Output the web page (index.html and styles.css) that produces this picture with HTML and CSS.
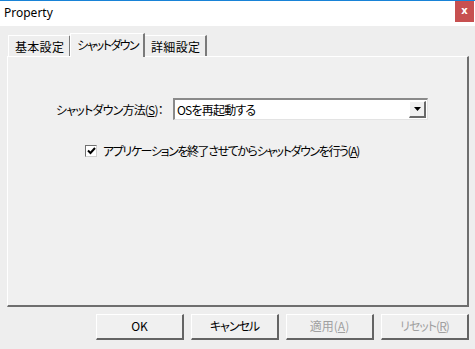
FILE: index.html
```html
<!DOCTYPE html>
<html lang="ja">
<head>
    <meta charset="UTF-8">
    <meta name="viewport" content="width=device-width, initial-scale=1.0">
    <title>Property</title>
    <link rel="stylesheet" href="styles.css">
</head>
<body>
    <div class="window">
        <div class="titlebar">
            <span class="title">Property</span>
            <span class="close">x</span>
        </div>
        <div class="body">
            <div class="tabs">
                <div class="tab">基本設定</div>
                <div class="tab active">シャットダウン</div>
                <div class="tab">詳細設定</div>
            </div>
            <div class="panel">
                <div class="row">
                    <span class="label">シャットダウン方法(<u>S</u>)：</span>
                    <div class="select">
                        <span class="value">OSを再起動する</span>
                        <span class="arrow">
                            <svg width="7" height="4" viewBox="0 0 7 4"><path d="M0 0h7L3.5 4z" fill="#000"/></svg>
                        </span>
                    </div>
                </div>
                <label class="check">
                    <span class="box">
                        <svg width="9" height="9" viewBox="0 0 9 9"><path d="M1 4.5l2.5 2.5L8 2" stroke="#000" stroke-width="2" fill="none"/></svg>
                    </span>
                    <span class="check-text">アプリケーションを終了させてからシャットダウンを行う(<u>A</u>)</span>
                </label>
            </div>
            <div class="buttons">
                <div class="btn">OK</div>
                <div class="btn kana">キャンセル</div>
                <div class="btn disabled">適用(<u>A</u>)</div>
                <div class="btn disabled kana">リセット(<u>R</u>)</div>
            </div>
        </div>
    </div>
</body>
</html>
```

FILE: styles.css
```css
*{
    margin: 0;
    padding: 0;
    box-sizing: border-box;
}
body{
    width: 475px;
    height: 349px;
    overflow: hidden;
    font-family: "Noto Sans CJK JP", "Noto Sans", sans-serif;
    font-size: 12px;
    font-feature-settings: "palt";
    color: #000;
    background: #eeeeee;
}
.window{
    height: 349px;
    display: flex;
    flex-direction: column;
}
.titlebar{
    height: 26px;
    border-top: 1px solid #1883d7;
    background: #fff;
    display: flex;
    justify-content: space-between;
    align-items: flex-start;
}
.title{
    font-family: "Noto Sans", sans-serif;
    font-size: 12px;
    line-height: 24px;
    padding-left: 4px;
}
.close{
    width: 19px;
    height: 21px;
    margin-right: 1px;
    background: #c75050;
    color: #fff;
    font-family: "DejaVu Sans", sans-serif;
    font-weight: bold;
    font-size: 10px;
    line-height: 19px;
    text-align: center;
}
.body{
    flex: 1;
    padding: 7px 6px 0 7px;
    display: flex;
    flex-direction: column;
}
.tabs{
    display: flex;
    align-items: flex-end;
    height: 24px;
    padding-left: 1px;
}
.tab{
    height: 22px;
    padding: 0 5px 0 6px;
    line-height: 21px;
    border-top: 1px solid #fff;
    border-left: 1px solid #fff;
    border-right: 2px solid #7a7a7a;
    letter-spacing: 0.3px;
    background: #eeeeee;
}
.tab.active{
    height: 24px;
    line-height: 22px;
    padding: 0 5px 0 6px;
    background: #f0f0f0;
    margin: 0 -1px 0 -1px;
    position: relative;
    z-index: 1;
    letter-spacing: -1.6px;
}
.panel{
    height: 251px;
    background: #f0f0f0;
    border-top: 1px solid #fff;
    border-left: 1px solid #fff;
    border-right: 2px solid #6e6e6e;
    border-bottom: 2px solid #6e6e6e;
    margin-top: -1px;
    padding: 41px 0 0 48px;
}
.row{
    display: flex;
    align-items: center;
}
.label{
    letter-spacing: -0.8px;
    width: 117px;
    white-space: nowrap;
}
.select{
    width: 255px;
    height: 22px;
    background: #fff;
    border-top: 2px solid #8a8a8a;
    border-left: 2px solid #8a8a8a;
    border-right: 1px solid #e3e3e3;
    border-bottom: 1px solid #e3e3e3;
    display: flex;
    align-items: center;
    justify-content: space-between;
    padding: 0 1px 0 2px;
}
.value{
    line-height: 18px;
    letter-spacing: -0.8px;
}
.arrow{
    width: 17px;
    height: 17px;
    background: #f0f0f0;
    border-top: 1px solid #fff;
    border-left: 1px solid #fff;
    border-right: 2px solid #696969;
    border-bottom: 2px solid #696969;
    display: flex;
    align-items: center;
    justify-content: center;
}
.check{
    display: flex;
    align-items: center;
    gap: 6px;
    margin: 22px 0 0 29px;
}
.check-text{
    letter-spacing: -1.4px;
}
.box{
    width: 12px;
    height: 12px;
    background: #fff;
    border-top: 1px solid #707070;
    border-left: 1px solid #707070;
    border-right: 1px solid #d0d0d0;
    border-bottom: 1px solid #d0d0d0;
    display: flex;
    align-items: center;
    justify-content: center;
}
.buttons{
    display: flex;
    justify-content: flex-end;
    gap: 7px;
    margin-top: 7px;
}
.btn{
    width: 88px;
    height: 26px;
    border-top: 1px solid #fff;
    border-left: 1px solid #fff;
    border-right: 2px solid #646464;
    border-bottom: 2px solid #646464;
    background: #f0f0f0;
    text-align: center;
    line-height: 22px;
}
.btn.kana{
    letter-spacing: -1px;
}
.btn.disabled{
    color: #a0a0a0;
}
```
